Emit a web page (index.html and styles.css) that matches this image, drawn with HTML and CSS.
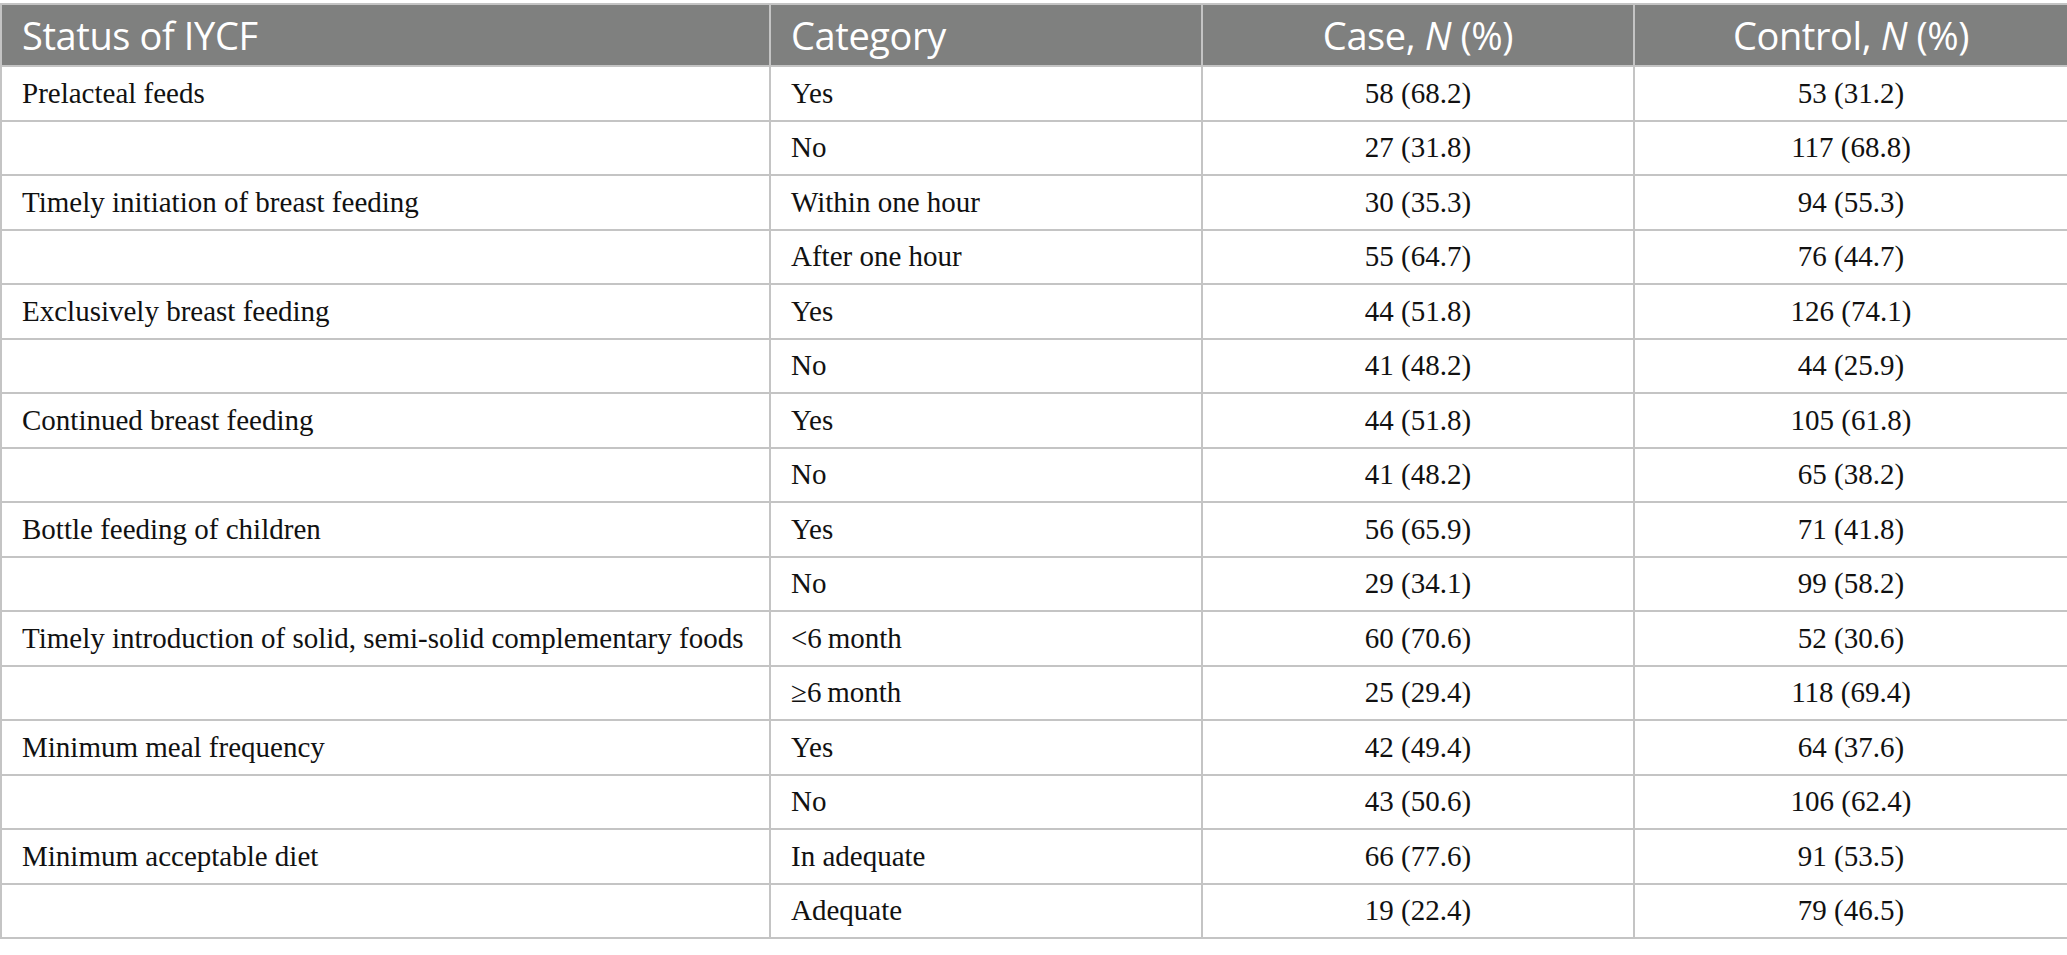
FILE: index.html
```html
<!DOCTYPE html>
<html>
<head>
<meta charset="utf-8">
<link rel="stylesheet" href="styles.css">
</head>
<body>
<table class="tbl">
<colgroup>
<col class="c1"><col class="c2"><col class="c3"><col class="c4">
</colgroup>
<thead>
<tr><th class="l">Status of IYCF</th><th class="l">Category</th><th>Case, <i>N</i> (%)</th><th>Control, <i>N</i> (%)</th></tr>
</thead>
<tbody>
<tr><td>Prelacteal feeds</td><td>Yes</td><td class="n">58 (68.2)</td><td class="n">53 (31.2)</td></tr>
<tr><td></td><td>No</td><td class="n">27 (31.8)</td><td class="n">117 (68.8)</td></tr>
<tr><td>Timely initiation of breast feeding</td><td>Within one hour</td><td class="n">30 (35.3)</td><td class="n">94 (55.3)</td></tr>
<tr><td></td><td>After one hour</td><td class="n">55 (64.7)</td><td class="n">76 (44.7)</td></tr>
<tr><td>Exclusively breast feeding</td><td>Yes</td><td class="n">44 (51.8)</td><td class="n">126 (74.1)</td></tr>
<tr><td></td><td>No</td><td class="n">41 (48.2)</td><td class="n">44 (25.9)</td></tr>
<tr><td>Continued breast feeding</td><td>Yes</td><td class="n">44 (51.8)</td><td class="n">105 (61.8)</td></tr>
<tr><td></td><td>No</td><td class="n">41 (48.2)</td><td class="n">65 (38.2)</td></tr>
<tr><td>Bottle feeding of children</td><td>Yes</td><td class="n">56 (65.9)</td><td class="n">71 (41.8)</td></tr>
<tr><td></td><td>No</td><td class="n">29 (34.1)</td><td class="n">99 (58.2)</td></tr>
<tr><td>Timely introduction of solid, semi-solid complementary foods</td><td>&lt;6&#8201;month</td><td class="n">60 (70.6)</td><td class="n">52 (30.6)</td></tr>
<tr><td></td><td>≥6&#8201;month</td><td class="n">25 (29.4)</td><td class="n">118 (69.4)</td></tr>
<tr><td>Minimum meal frequency</td><td>Yes</td><td class="n">42 (49.4)</td><td class="n">64 (37.6)</td></tr>
<tr><td></td><td>No</td><td class="n">43 (50.6)</td><td class="n">106 (62.4)</td></tr>
<tr><td>Minimum acceptable diet</td><td>In adequate</td><td class="n">66 (77.6)</td><td class="n">91 (53.5)</td></tr>
<tr><td></td><td>Adequate</td><td class="n">19 (22.4)</td><td class="n">79 (46.5)</td></tr>
</tbody>
</table>
</body>
</html>
```
FILE: styles.css
```css
html, body {
  margin: 0;
  padding: 0;
  background: #ffffff;
}
body {
  padding-top: 3px;
}
.tbl {
  width: 2067px;
  border-collapse: collapse;
  table-layout: fixed;
}
.c1 { width: 769px; }
.c2 { width: 432px; }
.c3 { width: 432px; }
.c4 { width: 434px; }
.tbl th {
  background: #7f807f;
  color: #ffffff;
  font-family: "Open Sans", "Noto Sans", sans-serif;
  font-weight: 400;
  font-size: 38px;
  height: 62px;
  padding: 0 20px;
  text-align: center;
  border: 2px solid #c4c4c4;
  box-sizing: border-box;
  letter-spacing: -0.4px;
}
.tbl th.l { text-align: left; }
.tbl td {
  font-family: "Liberation Serif", "Times New Roman", serif;
  font-size: 29px;
  color: #111111;
  height: 54.5px;
  box-sizing: border-box;
  padding: 0 20px;
  border: 2px solid #c4c4c4;
  text-align: left;
  vertical-align: middle;
}
.tbl td.n { text-align: center; }
```
